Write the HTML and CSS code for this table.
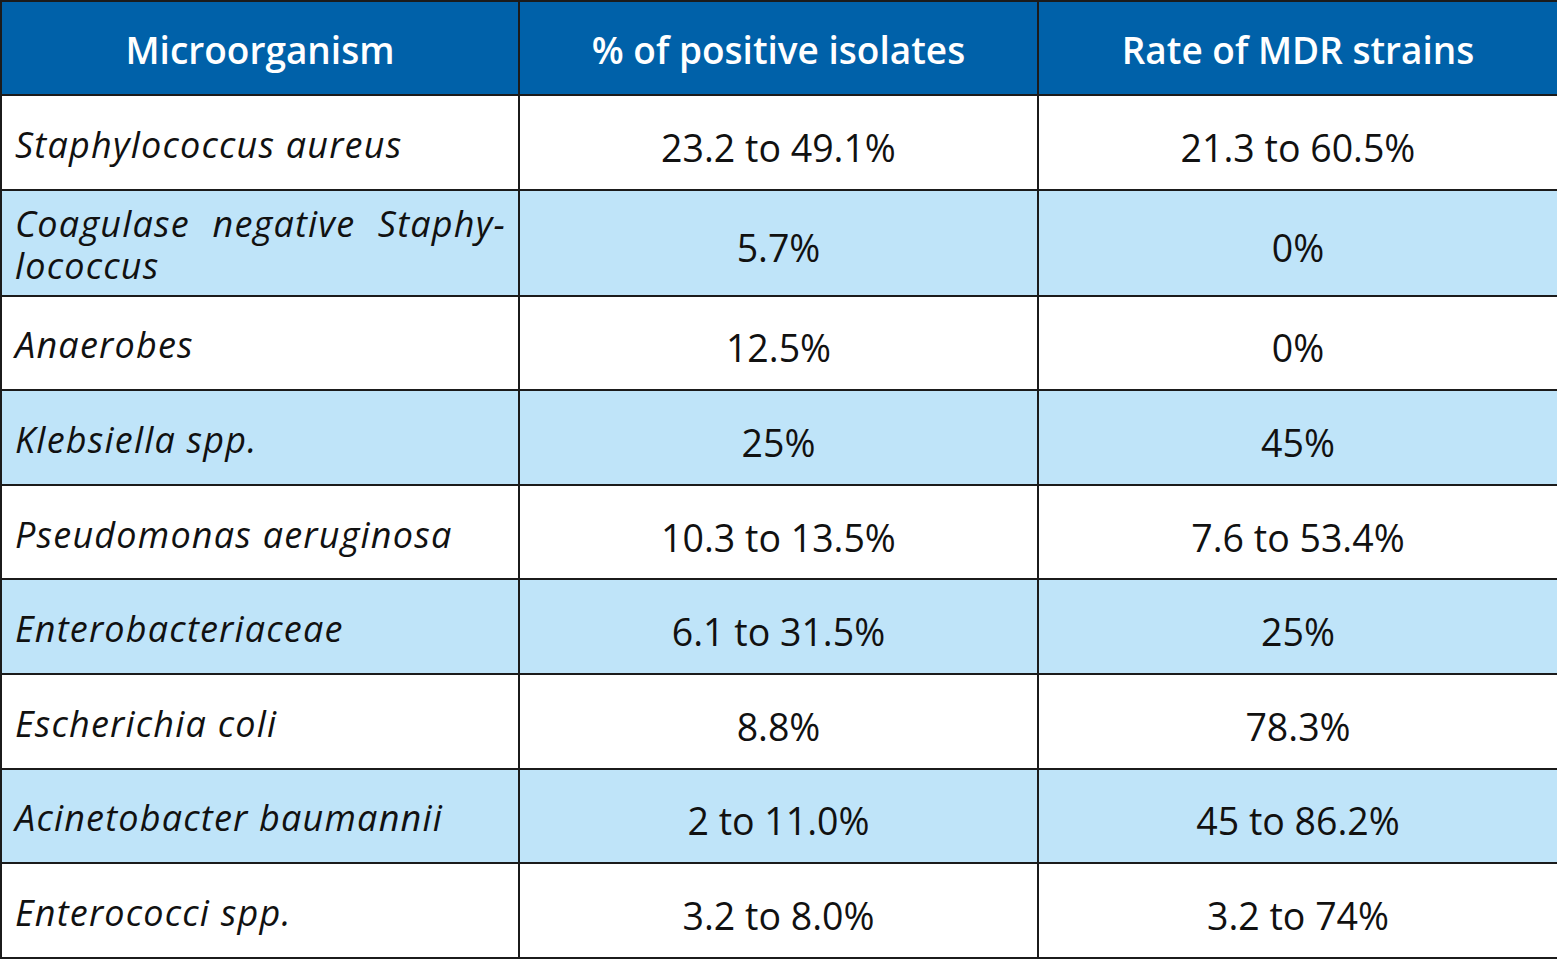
FILE: index.html
```html
<!DOCTYPE html>
<html lang="en">
<head>
<meta charset="utf-8">
<title>Microorganisms</title>
<link rel="stylesheet" href="styles.css">
</head>
<body>
<table class="grid">
  <colgroup><col class="c1"><col class="c2"><col class="c3"></colgroup>
  <thead>
    <tr class="head"><th>Microorganism</th><th>% of positive isolates</th><th>Rate of MDR strains</th></tr>
  </thead>
  <tbody>
    <tr><td class="org">Staphylococcus aureus</td><td>23.2 to 49.1%</td><td>21.3 to 60.5%</td></tr>
    <tr class="alt tall"><td class="org"><span class="just">Coagulase negative Staphy-</span><span class="line2">lococcus</span></td><td>5.7%</td><td>0%</td></tr>
    <tr><td class="org">Anaerobes</td><td>12.5%</td><td>0%</td></tr>
    <tr class="alt"><td class="org">Klebsiella spp.</td><td>25%</td><td>45%</td></tr>
    <tr><td class="org">Pseudomonas aeruginosa</td><td>10.3 to 13.5%</td><td>7.6 to 53.4%</td></tr>
    <tr class="alt"><td class="org">Enterobacteriaceae</td><td>6.1 to 31.5%</td><td>25%</td></tr>
    <tr><td class="org">Escherichia coli</td><td>8.8%</td><td>78.3%</td></tr>
    <tr class="alt"><td class="org">Acinetobacter baumannii</td><td>2 to 11.0%</td><td>45 to 86.2%</td></tr>
    <tr><td class="org">Enterococci spp.</td><td>3.2 to 8.0%</td><td>3.2 to 74%</td></tr>
  </tbody>
</table>
</body>
</html>
```
FILE: styles.css
```css
html, body {
  margin: 0;
  padding: 0;
  background: #ffffff;
}
.grid {
  border-collapse: collapse;
  width: 1557px;
  table-layout: fixed;
  font-family: "Open Sans", "Noto Sans", sans-serif;
  color: #111111;
}
.c1 { width: 518px; }
.c2 { width: 519px; }
.c3 { width: 520px; }
.grid th, .grid td {
  border: 2px solid #1b1b1b;
  padding: 0;
  text-align: center;
  vertical-align: middle;
  box-sizing: border-box;
}
.head th {
  background: #0061a9;
  color: #ffffff;
  font-weight: 600;
  font-size: 37px;
  height: 94px;
  padding-top: 2px;
}
.grid td {
  height: 94.6px;
  font-size: 37.5px;
  font-weight: 400;
  padding-top: 10px;
}
.grid tr.tall td { height: 106px; }
.grid tr.alt td { background: #bfe4f9; }
.grid td.org {
  text-align: left;
  font-style: italic;
  font-size: 36px;
  padding-left: 13px;
  padding-right: 12px;
  padding-top: 4px;
  letter-spacing: 1.2px;
}
.just {
  display: block;
  text-align: justify;
  text-align-last: justify;
  line-height: 42px;
}
.line2 {
  display: block;
  line-height: 42px;
}
```
